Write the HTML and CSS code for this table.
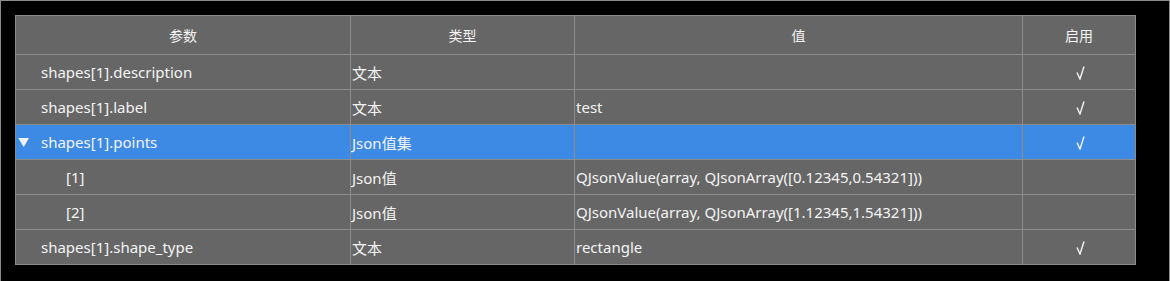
FILE: index.html
```html
<!DOCTYPE html>
<html lang="zh-CN">
<head>
    <meta charset="UTF-8">
    <meta name="viewport" content="width=device-width, initial-scale=1.0">
    <title>参数表</title>
    <link rel="stylesheet" href="styles.css">
</head>
<body>

    <div class="frame">
        <table class="params">
            <thead>
                <tr>
                    <th class="col-name">参数</th>
                    <th class="col-type">类型</th>
                    <th class="col-value">值</th>
                    <th class="col-on">启用</th>
                </tr>
            </thead>
            <tbody>
                <tr>
                    <td><span class="name">shapes[1].description</span></td>
                    <td>文本</td>
                    <td></td>
                    <td class="on"><svg class="tick" viewBox="0 0 9 14"><path d="M1 6.5 L4 13 L8 0.5"/></svg></td>
                </tr>
                <tr>
                    <td><span class="name">shapes[1].label</span></td>
                    <td>文本</td>
                    <td>test</td>
                    <td class="on"><svg class="tick" viewBox="0 0 9 14"><path d="M1 6.5 L4 13 L8 0.5"/></svg></td>
                </tr>
                <tr class="selected">
                    <td><span class="arrow">▼</span><span class="name">shapes[1].points</span></td>
                    <td>Json值集</td>
                    <td></td>
                    <td class="on"><svg class="tick" viewBox="0 0 9 14"><path d="M1 6.5 L4 13 L8 0.5"/></svg></td>
                </tr>
                <tr>
                    <td><span class="name child">[1]</span></td>
                    <td>Json值</td>
                    <td>QJsonValue(array, QJsonArray([0.12345,0.54321]))</td>
                    <td class="on"></td>
                </tr>
                <tr>
                    <td><span class="name child">[2]</span></td>
                    <td>Json值</td>
                    <td>QJsonValue(array, QJsonArray([1.12345,1.54321]))</td>
                    <td class="on"></td>
                </tr>
                <tr>
                    <td><span class="name">shapes[1].shape_type</span></td>
                    <td>文本</td>
                    <td>rectangle</td>
                    <td class="on"><svg class="tick" viewBox="0 0 9 14"><path d="M1 6.5 L4 13 L8 0.5"/></svg></td>
                </tr>
            </tbody>
        </table>
    </div>

</body>
</html>
```

FILE: styles.css
```css
body {
    margin: 0;
    background-color: #000;
    font-family: "Noto Sans", "Noto Sans CJK SC", sans-serif;
    color: #f4f4f4;
}

.frame {
    height: 281px;
    box-sizing: border-box;
    border: 1px solid #8c8c8c;
    border-bottom: none;
    padding: 14px 0 0 14px;
}

.params {
    border-collapse: separate;
    border-spacing: 0;
    border-top: 1px solid #8c8c8c;
    border-left: 1px solid #8c8c8c;
    background-color: #666666;
    table-layout: fixed;
    width: 1120px;
}

th, td {
    border-right: 1px solid #8c8c8c;
    border-bottom: 1px solid #8c8c8c;
    padding: 0 0 0 1px;
    white-space: nowrap;
    overflow: hidden;
    text-align: left;
}

th {
    height: 38px;
    font-weight: normal;
    font-size: 14px;
    text-align: center;
    padding: 0;
}

td {
    height: 34px;
    font-size: 15px;
}

.col-name { width: 334px; }
.col-type { width: 223px; }
.col-value { width: 447px; }
.col-on { width: 112px; }

td.on {
    text-align: center;
    padding: 0 0 0 2px;
    line-height: 0;
}

.tick {
    width: 9px;
    height: 14px;
    margin-top: 2px;
    fill: none;
    stroke: #f4f4f4;
    stroke-width: 1.4;
}

.name {
    padding-left: 24px;
}

.name.child {
    padding-left: 49px;
}

.arrow {
    display: inline-block;
    width: 0;
    margin-left: 1px;
    margin-right: -1px;
    font-size: 11px;
    vertical-align: 1px;
}

.selected td {
    background-color: #3d8ae4;
}
```
